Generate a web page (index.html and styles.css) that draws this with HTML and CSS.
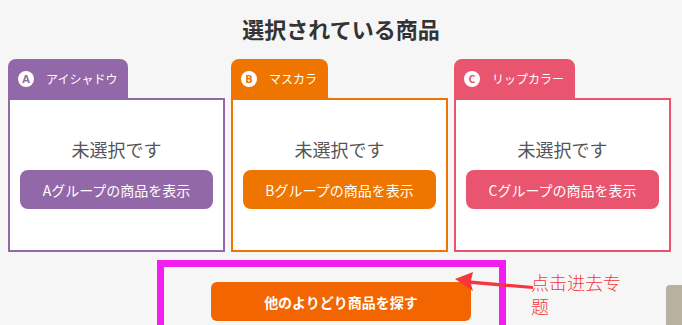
FILE: index.html
```html
<!DOCTYPE html>
<html lang="ja">
<head>
<meta charset="utf-8">
<title>選択されている商品</title>
<link rel="stylesheet" href="styles.css">
</head>
<body>
<div class="page">
  <h1 class="title">選択されている商品</h1>
  <div class="groups">
    <div class="group group-a">
      <div class="tab"><span class="badge">A</span><span class="tab-label">アイシャドウ</span></div>
      <div class="panel">
        <p class="empty">未選択です</p>
        <button class="show-btn">Aグループの商品を表示</button>
      </div>
    </div>
    <div class="group group-b">
      <div class="tab"><span class="badge">B</span><span class="tab-label">マスカラ</span></div>
      <div class="panel">
        <p class="empty">未選択です</p>
        <button class="show-btn">Bグループの商品を表示</button>
      </div>
    </div>
    <div class="group group-c">
      <div class="tab"><span class="badge">C</span><span class="tab-label">リップカラー</span></div>
      <div class="panel">
        <p class="empty">未選択です</p>
        <button class="show-btn">Cグループの商品を表示</button>
      </div>
    </div>
  </div>
  <div class="more">
    <button class="more-btn">他のよりどり商品を探す</button>
  </div>

  <div class="highlight"></div>
  <svg class="arrow" width="90" height="24" viewBox="0 0 90 24">
    <polygon fill="#f5383b" points="0,8 18,1 16,9.5 78,15 78,18 16,13 18,20"/>
  </svg>
  <p class="note">点击进去专题</p>
  <div class="side-tab"></div>
</div>
</body>
</html>
```

FILE: styles.css
```css
* { box-sizing: border-box; }

html, body {
  margin: 0;
  padding: 0;
  background: #f6f6f6;
}

body {
  font-family: "Noto Sans CJK JP", "Noto Sans", sans-serif;
  color: #333;
  overflow: hidden;
  height: 325px;
}

.page {
  position: relative;
  width: 682px;
  height: 325px;
}

.title {
  margin: 0;
  padding-top: 15px;
  font-size: 22px;
  line-height: 26px;
  font-weight: 700;
  text-align: center;
  color: #333;
}

.groups {
  display: flex;
  gap: 6px;
  padding: 0 8px;
  margin-top: 18px;
}

.group {
  width: 217px;
  display: flex;
  flex-direction: column;
}

.tab {
  align-self: flex-start;
  height: 39px;
  display: flex;
  align-items: center;
  gap: 12px;
  padding: 0 11px 0 10px;
  border-radius: 8px 8px 0 0;
  color: #fff;
}

.badge {
  width: 16px;
  height: 16px;
  border-radius: 50%;
  background: #fff;
  font-family: "Open Sans", "Noto Sans", sans-serif;
  font-weight: 700;
  font-size: 11px;
  line-height: 16px;
  text-align: center;
}

.tab-label {
  font-size: 12px;
  line-height: 16px;
}

.panel {
  height: 154px;
  background: #fff;
  border: 2px solid;
  padding: 36px 10px 0;
  display: flex;
  flex-direction: column;
  align-items: stretch;
}

.empty {
  margin: 0;
  font-size: 18px;
  line-height: 26px;
  color: #555;
  text-align: center;
  font-weight: 400;
}

.show-btn {
  margin-top: 8px;
  height: 39px;
  border: 0;
  border-radius: 8px;
  color: #fff;
  font-family: "Noto Sans CJK JP", "Noto Sans", sans-serif;
  font-size: 14px;
  padding: 0;
}

.group-a .tab, .group-a .show-btn { background: #9268a8; }
.group-a .badge { color: #9268a8; }
.group-a .panel { border-color: #9268a8; }

.group-b .tab, .group-b .show-btn { background: #ee7500; }
.group-b .badge { color: #ee7500; }
.group-b .panel { border-color: #ee7500; }

.group-c .tab, .group-c .show-btn { background: #e9546f; }
.group-c .badge { color: #e9546f; }
.group-c .panel { border-color: #e9546f; }

.more {
  display: flex;
  justify-content: center;
  margin-top: 30px;
}

.more-btn {
  width: 260px;
  height: 39px;
  border: 0;
  border-radius: 6px;
  background: #f26500;
  color: #fff;
  font-family: "Noto Sans CJK JP", "Noto Sans", sans-serif;
  font-weight: 700;
  font-size: 14px;
  padding: 0;
}

.highlight {
  position: absolute;
  left: 157px;
  top: 260px;
  width: 349px;
  height: 72px;
  border: 7px solid #f21ff0;
}

.arrow {
  position: absolute;
  left: 455px;
  top: 271px;
}

.note {
  position: absolute;
  left: 531px;
  top: 270px;
  width: 96px;
  margin: 0;
  font-family: "Noto Sans CJK SC", sans-serif;
  font-weight: 300;
  font-size: 18px;
  line-height: 24px;
  color: #f5383b;
}

.side-tab {
  position: absolute;
  left: 666px;
  top: 285px;
  width: 20px;
  height: 45px;
  border-radius: 4px 0 0 0;
  background: #b8b1a2;
}
```
